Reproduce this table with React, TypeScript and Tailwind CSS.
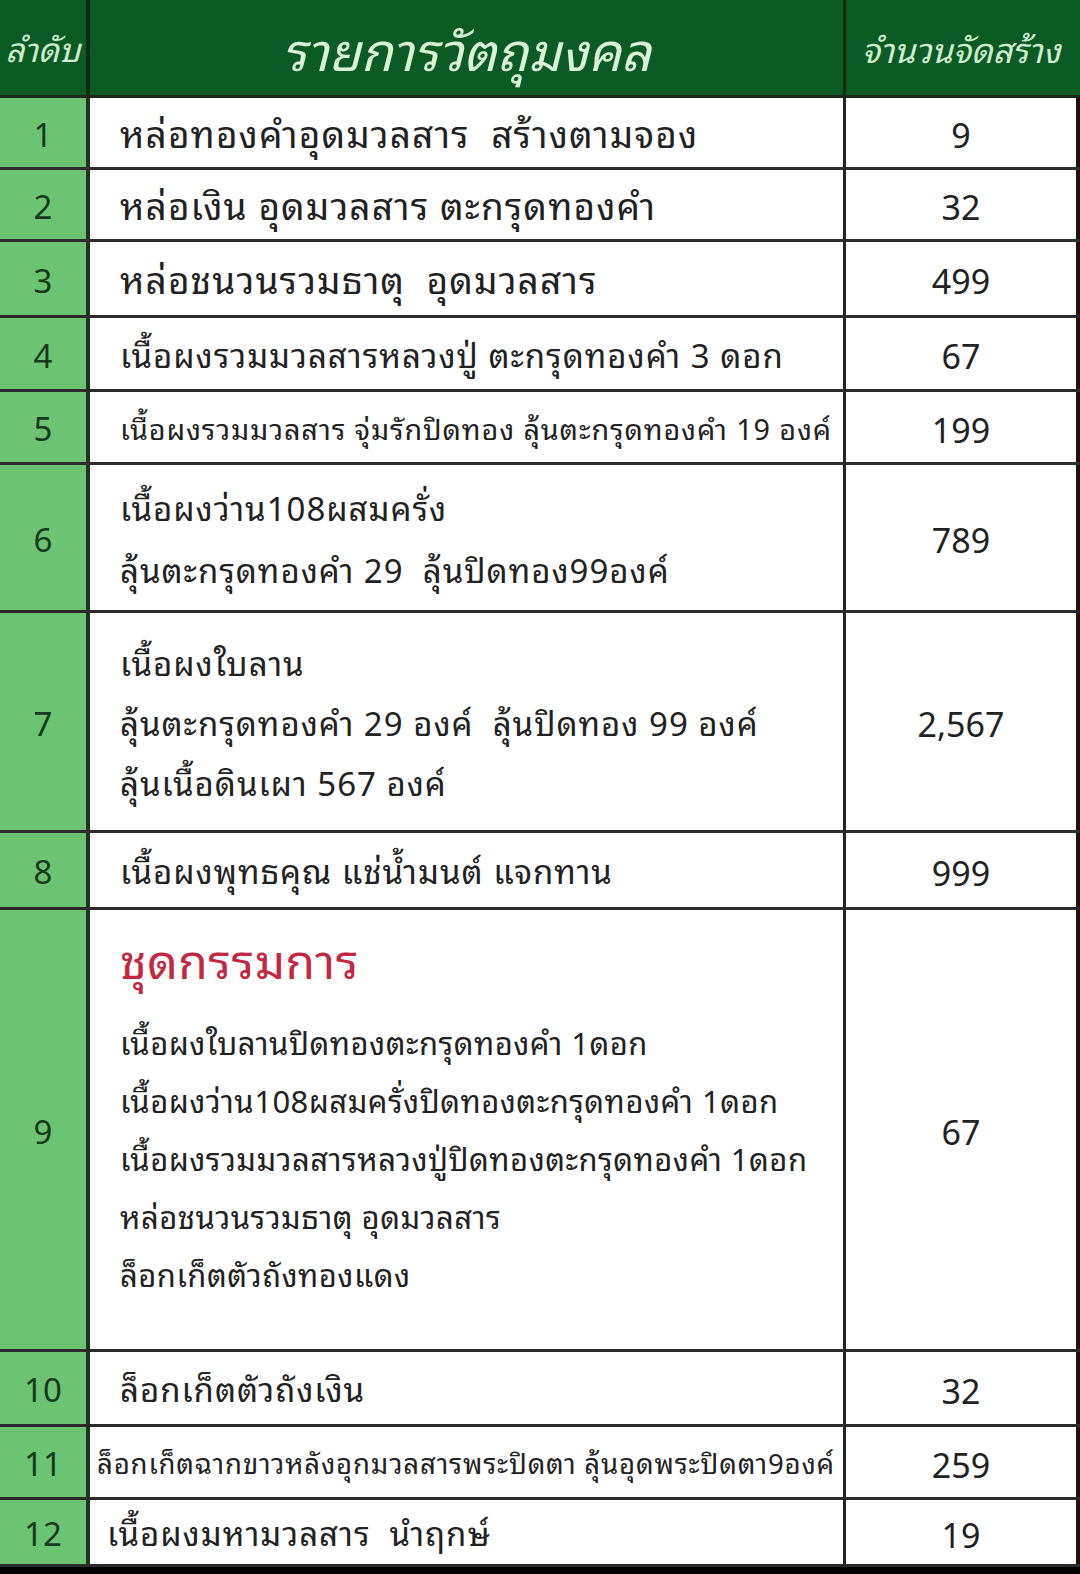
const rows: { no: string; lines: string[]; qty: string; h: string; size: string; pl: string; gap?: string }[] = [
  { no: "1", lines: ["หล่อทองคำอุดมวลสาร  สร้างตามจอง"], qty: "9", h: "h-[72px]", size: "text-[37px]", pl: "pl-[30px]" },
  { no: "2", lines: ["หล่อเงิน อุดมวลสาร ตะกรุดทองคำ"], qty: "32", h: "h-[72px]", size: "text-[37px]", pl: "pl-[30px]" },
  { no: "3", lines: ["หล่อชนวนรวมธาตุ  อุดมวลสาร"], qty: "499", h: "h-[76px]", size: "text-[37px]", pl: "pl-[30px]" },
  { no: "4", lines: ["เนื้อผงรวมมวลสารหลวงปู่ ตะกรุดทองคำ 3 ดอก"], qty: "67", h: "h-[74px]", size: "text-[33px]", pl: "pl-[30px]" },
  { no: "5", lines: ["เนื้อผงรวมมวลสาร จุ่มรักปิดทอง ลุ้นตะกรุดทองคำ 19 องค์"], qty: "199", h: "h-[73px]", size: "text-[28.8px]", pl: "pl-[30px]" },
  { no: "6", lines: ["เนื้อผงว่าน108ผสมครั่ง", "ลุ้นตะกรุดทองคำ 29  ลุ้นปิดทอง99องค์"], qty: "789", h: "h-[148px]", size: "text-[33px]", pl: "pl-[30px]", gap: "gap-[21px]" },
  {
    no: "7",
    lines: ["เนื้อผงใบลาน", "ลุ้นตะกรุดทองคำ 29 องค์  ลุ้นปิดทอง 99 องค์", "ลุ้นเนื้อดินเผา 567 องค์"],
    qty: "2,567",
    h: "h-[220px]",
    size: "text-[33px]",
    pl: "pl-[30px]",
    gap: "gap-[19px]",
  },
  { no: "8", lines: ["เนื้อผงพุทธคุณ แช่น้ำมนต์ แจกทาน"], qty: "999", h: "h-[77px]", size: "text-[33px]", pl: "pl-[30px]" },
]

const tail: { no: string; text: string; qty: string; h: string; size: string; pl: string }[] = [
  { no: "10", text: "ล็อกเก็ตตัวถังเงิน", qty: "32", h: "h-[75px]", size: "text-[33px]", pl: "pl-[30px]" },
  { no: "11", text: "ล็อกเก็ตฉากขาวหลังอุกมวลสารพระปิดตา ลุ้นอุดพระปิดตา9องค์", qty: "259", h: "h-[73px]", size: "text-[27.6px]", pl: "pl-[7px]" },
  { no: "12", text: "เนื้อผงมหามวลสาร  นำฤกษ์", qty: "19", h: "h-[67px]", size: "text-[33px]", pl: "pl-[17px]" },
]

const committee = [
  "เนื้อผงใบลานปิดทองตะกรุดทองคำ 1ดอก",
  "เนื้อผงว่าน108ผสมครั่งปิดทองตะกรุดทองคำ 1ดอก",
  "เนื้อผงรวมมวลสารหลวงปู่ปิดทองตะกรุดทองคำ 1ดอก",
  "หล่อชนวนรวมธาตุ อุดมวลสาร",
  "ล็อกเก็ตตัวถังทองแดง",
]

function Row({ no, qty, h, children }: { no: string; qty: string; h: string; children: React.ReactNode }) {
  return (
    <div className={`flex ${h} border-b-[3px] border-[#2b2b2b]`}>
      <div className="flex w-[86px] shrink-0 items-center justify-center bg-[#6cc472] text-[33px] text-[#173a1c]">{no}</div>
      <div className="w-[4px] shrink-0 bg-[#1f3322]" />
      <div className="flex w-[753px] shrink-0 flex-col justify-center overflow-hidden bg-white">{children}</div>
      <div className="w-[3px] shrink-0 bg-[#222]" />
      <div className="flex flex-1 items-center justify-center bg-white text-[34px] text-[#222]">{qty}</div>
      <div className="w-[4px] shrink-0 bg-[#2a0e0e]" />
    </div>
  )
}

export default function App() {
  return (
    <div className="h-[1574px] w-[1080px] overflow-hidden bg-black font-['Noto_Sans_Thai_Looped','Loma','Garuda','Norasi','Noto_Sans_Thai','Open_Sans',sans-serif]">
      <div className="flex h-[98px] bg-[#0c5a24] border-b-[3px] border-[#1a2a1a]">
        <div className="flex w-[86px] shrink-0 items-center justify-center text-[33px] italic text-[#cfeccf]">ลำดับ</div>
        <div className="w-[4px] shrink-0 bg-[#0a2c12]" />
        <div className="flex w-[753px] shrink-0 items-center justify-center text-[52px] italic text-[#d9f2d6]">รายการวัตถุมงคล</div>
        <div className="w-[3px] shrink-0 bg-[#0a2c12]" />
        <div className="flex flex-1 items-center justify-center text-[34px] italic text-[#cfeccf]">จำนวนจัดสร้าง</div>
        <div className="w-[4px] shrink-0 bg-[#0c5a24]" />
      </div>

      {rows.map((r) => (
        <Row key={r.no} no={r.no} qty={r.qty} h={r.h}>
          <div className={`flex flex-col ${r.gap ?? ""} ${r.pl} ${r.size} leading-tight tracking-[0.03em] whitespace-pre text-[#222]`}>
            {r.lines.map((l) => (
              <span key={l}>{l}</span>
            ))}
          </div>
        </Row>
      ))}

      <Row no="9" qty="67" h="h-[442px]">
        <div className="flex flex-col pl-[30px] pb-[38px] tracking-[0.03em] whitespace-pre text-[#222]">
          <span className="text-[48px] leading-tight text-[#c3283f]">ชุดกรรมการ</span>
          <div className="mt-[32px] flex flex-col gap-[16px] text-[31px] leading-[42px]">
            {committee.map((l) => (
              <span key={l}>{l}</span>
            ))}
          </div>
        </div>
      </Row>

      {tail.map((r) => (
        <Row key={r.no} no={r.no} qty={r.qty} h={r.h}>
          <span className={`${r.pl} ${r.size} leading-tight tracking-[0.03em] whitespace-pre text-[#222]`}>{r.text}</span>
        </Row>
      ))}
    </div>
  )
}
